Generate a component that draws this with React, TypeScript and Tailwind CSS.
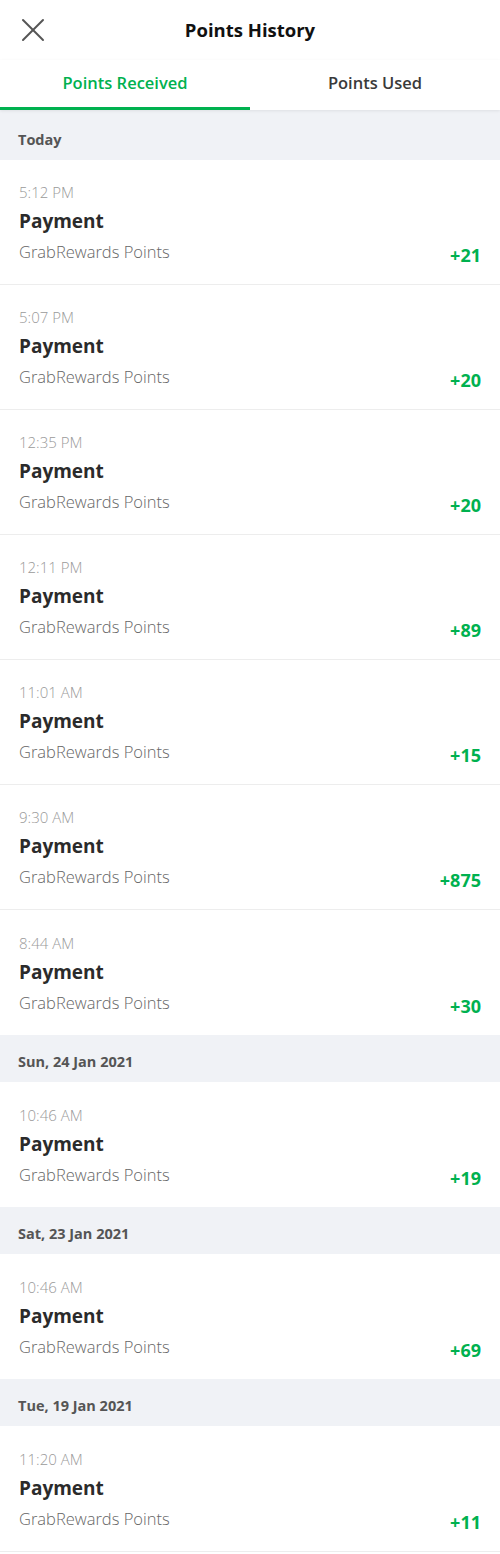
const sections = [
  {
    label: "Today",
    first: true,
    items: [
      { time: "5:12 PM", points: 21 },
      { time: "5:07 PM", points: 20 },
      { time: "12:35 PM", points: 20 },
      { time: "12:11 PM", points: 89 },
      { time: "11:01 AM", points: 15 },
      { time: "9:30 AM", points: 875 },
      { time: "8:44 AM", points: 30 },
    ],
  },
  { label: "Sun, 24 Jan 2021", items: [{ time: "10:46 AM", points: 19 }] },
  { label: "Sat, 23 Jan 2021", items: [{ time: "10:46 AM", points: 69 }] },
  { label: "Tue, 19 Jan 2021", items: [{ time: "11:20 AM", points: 11 }] },
];

export default function App() {
  return (
    <div className="min-h-screen w-[500px] bg-white text-[#2b2b2b] [font-family:'Open_Sans',sans-serif]">
      <header className="relative flex h-[60px] items-center justify-center">
        <button
          aria-label="Close"
          className="absolute left-[20px] top-[17px] grid size-[26px] place-items-center text-[#555]"
          type="button"
        >
          <svg
            aria-hidden="true"
            className="size-[26px]"
            fill="none"
            stroke="currentColor"
            strokeLinecap="round"
            strokeWidth="2"
            viewBox="0 0 26 26"
          >
            <path d="M3 3l20 20" />
            <path d="M23 3L3 23" />
          </svg>
        </button>
        <h1 className="text-[18.5px] font-bold text-[#111]">Points History</h1>
      </header>

      <nav className="relative z-10 flex h-[50px] bg-white shadow-[0_1px_3px_rgba(0,0,0,0.08)]">
        <div className="flex flex-1 items-center justify-center border-b-[3px] border-[#00b14f] text-[16.5px] font-semibold text-[#00b14f]">
          Points Received
        </div>
        <div className="flex flex-1 items-center justify-center pb-[3px] text-[16.5px] font-semibold text-[#3a3a3a]">
          Points Used
        </div>
      </nav>

      <main>
        {sections.map((section) => (
          <section key={section.label}>
            <div
              className={`flex items-center bg-[#f0f2f6] pl-[18px] text-[14.5px] font-bold text-[#555] ${
                section.first ? "h-[50px] pt-[10px]" : "h-[47px] pt-[7px]"
              }`}
            >
              {section.label}
            </div>
            {section.items.map((item, index) => (
              <div
                className={`flex h-[125px] items-end justify-between px-[19px] pb-[21px] ${
                  index < section.items.length - 1 ? "border-b border-[#ededed]" : ""
                }`}
                key={item.time + index}
              >
                <div className="flex flex-col">
                  <span className="text-[15px] leading-[20px] font-light text-[#9a9a9a]">
                    {item.time}
                  </span>
                  <span className="mt-[8px] text-[19px] leading-[22px] font-bold text-[#2b2b2b]">
                    Payment
                  </span>
                  <span className="mt-[9px] text-[16.5px] leading-[22px] font-light text-[#666]">
                    GrabRewards Points
                  </span>
                </div>
                <span className="translate-y-[3px] text-[18px] leading-[22px] font-bold text-[#00b14f]">
                  +{item.points}
                </span>
              </div>
            ))}
          </section>
        ))}
        <div className="border-t border-[#ededed]" />
      </main>
    </div>
  );
}
